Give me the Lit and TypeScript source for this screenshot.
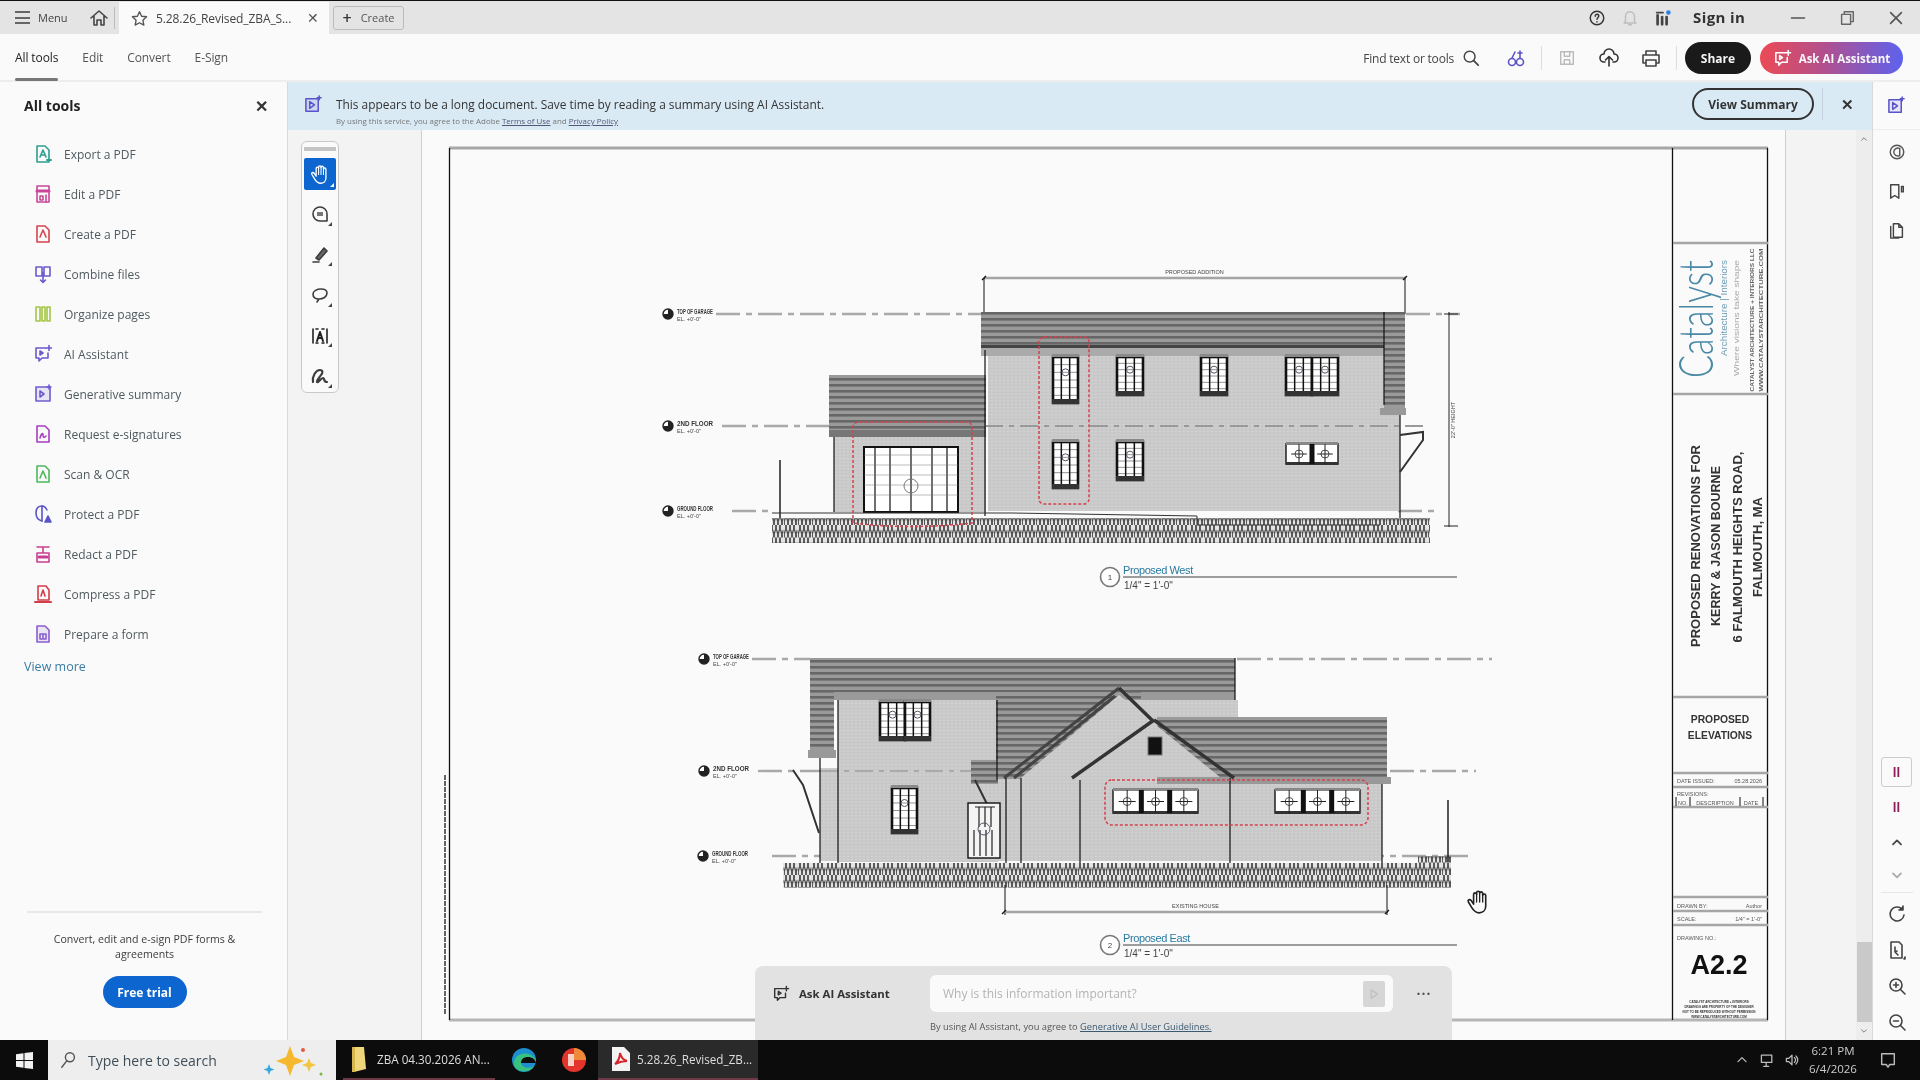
import { LitElement, html, css, svg } from 'lit';
import { customElement } from 'lit/decorators.js';

const icon = (body: unknown, size = 20, color = '#444', box = 20) => html`
  <svg width=${size} height=${size} viewBox="0 0 ${box} ${box}" fill="none" stroke=${color} stroke-width="1.6"
    stroke-linecap="round" stroke-linejoin="round" style="display:block;flex:none">${body}</svg>`;

const aiGlyph = svg`<path d="M3 4h10M3 4v10h3v3l3-3h6V9"/><path d="M7 7v4l3-2z"/><path d="M16 1.5v5M13.5 4h5"/>`;
const fileBase = svg`<path d="M4 2h8l4 4v12H4z"/>`;
const handGlyph = (fill: string, line: string) => svg`
  <path d="M7 14V5a1.4 1.4 0 0 1 2.8 0V3.500a1.400 1.400 0 0 1 2.800 0V4a1.400 1.400 0 0 1 2.800 0v2a1.400 1.400 0 0 1 2.800 0V16c0 4-3 6-6 6s-5-1.500-7-5l-3-5c-1-2 1-3 2.500-1.500z" fill=${fill} stroke=${line} stroke-width="1.500"/>
  <path d="M9.800 5v7M12.600 4v8M15.400 5v7" stroke=${line} stroke-width="1.200"/>`;

const tools: [string, string, unknown][] = [
  ['Export a PDF', '#2d9f8f', svg`${fileBase}<path d="M7 13l3-7 3 7M8 11h4"/><path d="M14 16h4" stroke-width="2"/>`],
  ['Edit a PDF', '#c9479a', svg`<path d="M4 2h12v16H4z"/><path d="M4 7h12" stroke-width="3"/><path d="M7 12h3v4H7zM13 11v7"/>`],
  ['Create a PDF', '#d8434e', svg`${fileBase}<path d="M7 13l3-7 3 7"/>`],
  ['Combine files', '#6a5acd', svg`<path d="M3 3h6v9H3zM11 3h6v9h-6zM10 9v9M7.5 16l2.5 2.5 2.5-2.5"/>`],
  ['Organize pages', '#a3c644', svg`<path d="M3 3h4v14H3zM9 3h3v14H9zM14 3h3v14h-3z"/>`],
  ['AI Assistant', '#6a5acd', aiGlyph],
  ['Generative summary', '#6f5bd0', svg`<path d="M3 3h14v14H3z" fill="#6f5bd022"/><path d="M7 7v6l4-3z"/><path d="M16 1v4M14 3h4"/>`],
  ['Request e-signatures', '#a83ec2', svg`${fileBase}<path d="M7 14c1-4 3-6 3-3s1 3 3 1"/>`],
  ['Scan & OCR', '#4cb85c', svg`${fileBase}<path d="M7 14l3-7 3 7"/>`],
  ['Protect a PDF', '#5a53c8', svg`<path d="M9 2C5 2 3 5 3 9s2 7 6 8"/><path d="M9 2v15M9 2c3 0 4 2 5 4"/><path d="M12 18h6l-3-6z" fill="#5a53c8"/>`],
  ['Redact a PDF', '#c93f8f', svg`<path d="M4 3h12M10 3v6M4 9h12v9H4z"/><path d="M6 13h8" stroke-width="3"/>`],
  ['Compress a PDF', '#d43d4a', svg`<path d="M5 2h8l3 4v10H5z"/><path d="M8 12l2-6 2 6"/><path d="M2 18h16" stroke-width="2"/>`],
  ['Prepare a form', '#8a5ed0', svg`<path d="M4 2h8l4 4v12H4z" fill="#8a5ed022"/><path d="M7 10h6v5H7zM10 10v5"/>`],
];

const railLower: [string, unknown][] = [
  ['rotate', svg`<path d="M15 5a7 7 0 1 0 2 6"/><path d="M16 2v4h-4" fill="#333"/>`],
  ['fit', svg`<path d="M4 2h8l3 3v13H4z"/><path d="M8 7v5l2-1M8 12l3 3"/><path d="M17 19l1-2v2z" fill="#333"/>`],
  ['in', svg`<circle cx="9" cy="9" r="6"/><path d="M13.5 13.5L18 18M6.5 9h5M9 6.5v5"/>`],
  ['out', svg`<circle cx="9" cy="9" r="6"/><path d="M13.5 13.5L18 18M6.5 9h5"/>`],
];

// --- the drawing sheet, page coordinates are the content ---

const windowUnit = (x: number, y: number, w: number, h: number) => svg`
  <rect x=${x} y=${y} width=${w} height=${h} fill="#fff"/>
  <path d="M${x} ${y + h / 6}h${w}M${x} ${y + h / 3}h${w}M${x} ${y + h / 2}h${w}M${x} ${y + (2 * h) / 3}h${w}M${x} ${y + (5 * h) / 6}h${w}" stroke="#666" stroke-width=".7"/>
  <path d="M${x + w / 3} ${y}v${h}M${x + (2 * w) / 3} ${y}v${h}" stroke="#111" stroke-width="1.5"/>
  <rect x=${x} y=${y} width=${w} height=${h} fill="none" stroke="#111" stroke-width="2.6"/>
  <rect x=${x - 1} y=${y + h - 4} width=${w + 2} height="5" fill="#333"/>
  <rect x=${x - 1} y=${y - 3} width=${w + 2} height="3" fill="#8a8a8a"/>
  <circle cx=${x + w / 2} cy=${y + h / 3} r="3.500" fill="none" stroke="#556"/>
`;

const bandWindow = (x: number, y: number, w: number, h: number, n: number) => svg`
  <rect x=${x} y=${y} width=${w} height=${h} fill="#fff" stroke="#222" stroke-width="1.5"/>
  <rect x=${x} y=${y - 2} width=${w} height="3" fill="#888"/>
  <rect x=${x} y=${y + h - 2} width=${w} height="3" fill="#333"/>
  ${Array.from({ length: n }, (_, i) => svg`
    <rect x=${x + ((i + 1) * w) / n - 2.5} y=${y} width="5" height=${h} fill="#111" opacity=${i < n - 1 ? 1 : 0}/>
    <circle cx=${x + ((i + 0.5) * w) / n} cy=${y + h / 2} r="4" fill="none" stroke="#555"/>
    <path d="M${x + ((i + 0.2) * w) / n} ${y + h / 2}h${(0.6 * w) / n}M${x + ((i + 0.5) * w) / n} ${y}v${h}" stroke="#222"/>`)}
`;

const level = (x: number, y: number, label: string, from: number, to: number, extra = '') => svg`
  <path d="M${from} ${y}H${to}" stroke="#a9a9a9" stroke-width="2.4" stroke-dasharray="24 6 6 6"/>
  ${extra ? svg`<path d=${extra} stroke="#a9a9a9" stroke-width="2.4" stroke-dasharray="24 6 6 6"/>` : ''}
  <circle cx=${x} cy=${y} r="5" fill="#fff" stroke="#222" stroke-width="1.4"/>
  <path d="M${x} ${y - 5}a5 5 0 0 1 0 10zM${x - 5} ${y}a5 5 0 0 0 5 5v-5z" fill="#222"/>
  <text x=${x + 9} y=${y} textLength="36" lengthAdjust="spacingAndGlyphs" class="label">${label}</text>
  <text x=${x + 9} y=${y + 7} class="tiny">EL. +0'-0"</text>
`;

const dimension = (x1: number, x2: number, y: number, label: string, ty: number) => svg`
  <path d="M${x1} ${y}H${x2}" stroke="#a5a5a5" stroke-width="2.4"/>
  <path d="M${x1 - 2} ${y + 2}l4-4M${x2 - 2} ${y + 2}l4-4" stroke="#111" stroke-width="1.4"/>
  <text x=${(x1 + x2) / 2} y=${ty} text-anchor="middle" class="tiny">${label}</text>
`;

const caption = (n: string, title: string, cx: number, cy: number) => svg`
  <circle cx=${cx} cy=${cy} r="9.5" fill="#fff" stroke="#777" stroke-width="1.6"/>
  <text x=${cx} y=${cy + 3} text-anchor="middle" class="num">${n}</text>
  <path d="M${cx + 13} ${cy}H1457" stroke="#9d9d9d" stroke-width="2"/>
  <text x=${cx + 13} y=${cy - 3} class="cap">${title}</text>
  <text x=${cx + 14} y=${cy + 12} class="scale">1/4" = 1'-0"</text>
`;

const rule = (y: number) => svg`<path d="M1673 ${y}H1768" stroke="#a6a6a6" stroke-width="2.6"/>`;

const turned = (x: number, y: number, len: number, cls: string, text: string) => svg`
  <text transform="rotate(-90 ${x} ${y})" x=${x} y=${y} text-anchor="middle" textLength=${len} lengthAdjust="spacingAndGlyphs" class=${cls}>${text}</text>`;

const sheet = svg`
  <defs>
    <pattern id="roof" width="8" height="6" patternUnits="userSpaceOnUse">
      <rect width="8" height="6" fill="#9a9a9a"/><rect width="8" height="2.600" fill="#676767"/>
    </pattern>
    <pattern id="siding" width="4" height="3.400" patternUnits="userSpaceOnUse">
      <rect width="4" height="3.400" fill="#ededed"/>
      <path d="M0 3.400L1 0L2 3.400L3 0L4 3.400" fill="none" stroke="#8f8f8f" stroke-width=".4"/>
    </pattern>
    <pattern id="stone" width="14" height="12.500" patternUnits="userSpaceOnUse">
      <rect width="14" height="12.500" fill="#e4e4e4"/>
      <rect y="5" width="14" height="3" fill="#a0a0a0"/>
      <path d="M2 0v6M6 0v6M10 0v6M0 6.500v6M4 6.500v6M8 6.500v6M12 6.500v6" stroke="#111" stroke-width="1.300"/>
    </pattern>
  </defs>

  <!-- sheet frame -->
  <path d="M449 148H1768" stroke="#a6a6a6" stroke-width="3"/>
  <path d="M449 1020H1768" stroke="#b5b5b5" stroke-width="3"/>
  <path d="M449.5 148V1020M1672.5 148V1020M1767.5 148V1020" stroke="#111" stroke-width="1.3"/>
  <path d="M445 775V1015" stroke="#333" stroke-width="1.5" stroke-dasharray="5 1"/>

  <!-- proposed west -->
  ${dimension(984, 1405, 278, 'PROPOSED ADDITION', 274)}
  <path d="M984 278V314M1405 278V314" stroke="#111" stroke-width="1"/>
  ${level(668, 314, 'TOP OF GARAGE', 716, 981, 'M1406 314H1460')}
  ${level(668, 426, '2ND FLOOR', 722, 829)}
  ${level(668, 511, 'GROUND FLOOR', 732, 772, 'M1398 511H1440')}

  <rect x="829" y="375" width="157" height="57" fill="url(#roof)"/>
  <rect x="829" y="430" width="157" height="7" fill="#777"/>
  <rect x="834" y="437" width="152" height="75" fill="url(#siding)"/>
  <rect x="864" y="447" width="94" height="65" fill="#fff" stroke="#111" stroke-width="2"/>
  <path d="M875 447v65M890 447v65M911 447v65M932 447v65M947 447v65" stroke="#111" stroke-width="1.200"/>
  <path d="M864 455h94M864 465h94M864 475h94M864 485h94M864 495h94" stroke="#777" stroke-width=".5"/>
  <circle cx="911" cy="486" r="7" fill="none" stroke="#777"/>

  <rect x="988" y="350" width="412" height="161" fill="url(#siding)"/>
  <path d="M985 426H1425" stroke="#999" stroke-width="2" stroke-dasharray="18 6 5 6"/>
  <rect x="981" y="312" width="424" height="37" fill="url(#roof)"/>
  <rect x="981" y="345" width="405" height="3" fill="#444"/>
  <rect x="981" y="348" width="405" height="8" fill="#aaa"/>
  <rect x="1384" y="312" width="21" height="100" fill="url(#roof)"/>
  <rect x="1380" y="408" width="26" height="7" fill="#999"/>
  <path d="M985 350V516M1400 415V525M834 437V512M1384 312V405" stroke="#111" stroke-width="1.200"/>
  <path d="M1400 435l23-3v8l-23 32" fill="none" stroke="#333" stroke-width="2"/>
  <path d="M780 460V520" stroke="#111" stroke-width="1.400"/>

  ${windowUnit(1053, 357, 25, 46)}
  ${windowUnit(1117, 357, 26, 38)}
  ${windowUnit(1201, 357, 26, 38)}
  ${windowUnit(1286, 357, 26, 38)}
  ${windowUnit(1312, 357, 26, 38)}
  ${windowUnit(1053, 442, 25, 46)}
  ${windowUnit(1117, 442, 26, 38)}
  ${bandWindow(1286, 444, 52, 20, 2)}

  <rect x="772" y="518" width="658" height="25" fill="url(#stone)"/>
  <path d="M772 513H1012L1197 516V525H1380" fill="none" stroke="#333" stroke-width="1"/>
  <path d="M1449 312V527M1444 314h14M1444 526h14" stroke="#222" stroke-width="1"/>
  <text transform="rotate(-90 1455 420)" x="1455" y="420" text-anchor="middle" class="tiny">22'-0" HEIGHT</text>

  <rect x="1039" y="337" width="50" height="167" rx="5" class="redline"/>
  <path d="M853 523V428q0-6 6-6H966q6 0 6 6V523Q910 530 853 523Z" class="redline"/>
  ${caption('1', 'Proposed West', 1110, 577)}

  <!-- proposed east -->
  ${level(704, 659, 'TOP OF GARAGE', 752, 810, 'M1237 659H1492')}
  ${level(704, 771, '2ND FLOOR', 758, 820, 'M1390 771H1476')}
  ${level(703, 856, 'GROUND FLOOR', 772, 1470)}

  <rect x="838" y="695" width="160" height="167" fill="url(#siding)"/>
  <rect x="820" y="768" width="562" height="93" fill="url(#siding)"/>
  <rect x="1120" y="700" width="118" height="80" fill="url(#siding)"/>
  <path d="M820 771H1382" stroke="#aaa" stroke-width="2" stroke-dasharray="18 6 5 6"/>
  <rect x="810" y="658" width="425" height="36" fill="url(#roof)"/>
  <rect x="833" y="692" width="402" height="8" fill="#9a9a9a"/>
  <rect x="810" y="658" width="24" height="92" fill="url(#roof)"/>
  <rect x="808" y="750" width="28" height="8" fill="#999"/>
  <rect x="996" y="694" width="124" height="85" fill="url(#roof)"/>
  <rect x="1157" y="717" width="230" height="60" fill="url(#roof)"/>
  <rect x="971" y="760" width="27" height="24" fill="url(#roof)"/>
  <rect x="1127" y="669" width="14" height="30" fill="url(#roof)"/>
  <polygon points="1119,695 1016,782 1226,782" fill="url(#siding)"/>
  <rect x="1157" y="777" width="234" height="7" fill="#999"/>
  <path d="M1119 688L1004 778M1115 696L1014 778" stroke="#444" stroke-width="3"/>
  <path d="M1119 688L1154 722M1154 720L1072 778M1154 720L1234 778" stroke="#333" stroke-width="3.400"/>
  <rect x="1148" y="737" width="14" height="18" fill="#111" stroke="#777"/>
  <path d="M1006 778V882M1021 778V866M1080 780V866M1230 778V866M1382 784V866M997 700V780M1235 658V700M838 700V865M820 758V865" stroke="#111" stroke-width="1.200"/>
  <path d="M793 770l10 15 16 48M975 780l20 40" stroke="#333" stroke-width="2" fill="none"/>
  ${windowUnit(880, 702, 25, 38)}
  ${windowUnit(905, 702, 25, 38)}
  ${windowUnit(892, 788, 25, 45)}
  <rect x="968" y="803" width="32" height="55" fill="#f4f4f4" stroke="#111" stroke-width="1.400"/>
  <path d="M975 807h20M979 807v20M985 807v20M991 807v20M974 830v26M980 830v26M986 830v26M992 830v26" stroke="#222" stroke-width="1.200"/>
  <circle cx="984" cy="829" r="6" fill="none" stroke="#556"/>
  ${bandWindow(1113, 790, 85, 23, 3)}
  ${bandWindow(1275, 790, 85, 23, 3)}
  <rect x="783" y="863" width="668" height="25" fill="url(#stone)"/>
  <rect x="1418" y="856" width="33" height="10" fill="url(#stone)"/>
  <path d="M1448 800V862" stroke="#111" stroke-width="1.400"/>
  <path d="M1005 885V915M1387 885V915" stroke="#111" stroke-width="1"/>
  ${dimension(1004, 1387, 912, 'EXISTING HOUSE', 908)}
  <rect x="1105" y="780" width="263" height="45" rx="7" class="redline"/>
  ${caption('2', 'Proposed East', 1110, 945)}

  <!-- title block -->
  ${rule(243)}${rule(394)}${rule(697)}${rule(773)}${rule(787)}${rule(807)}${rule(897)}${rule(911)}${rule(925)}
  ${turned(1713, 319, 118, 'logo', 'Catalyst')}
  ${turned(1727, 308, 96, 'logo-sub', 'Architecture | Interiors')}
  ${turned(1739, 318, 116, 'logo-tag', 'Where visions take shape')}
  ${turned(1754, 320, 143, 'logo-ad', 'CATALYST ARCHITECTURE + INTERIORS LLC')}
  ${turned(1763, 320, 143, 'logo-ad', 'WWW.CATALYSTARCHITECTURE.COM')}
  ${turned(1700, 546, 202, 'project', 'PROPOSED RENOVATIONS FOR')}
  ${turned(1720, 546, 160, 'project', 'KERRY & JASON BOURNE')}
  ${turned(1742, 547, 191, 'project', '6 FALMOUTH HEIGHTS ROAD,')}
  ${turned(1762, 547, 100, 'project', 'FALMOUTH, MA')}
  <text x="1720" y="723" text-anchor="middle" class="sheet-title">PROPOSED</text>
  <text x="1720" y="739" text-anchor="middle" class="sheet-title">ELEVATIONS</text>
  <text x="1677" y="783" class="block">DATE ISSUED:</text>
  <text x="1762" y="783" text-anchor="end" class="block">05.28.2026</text>
  <text x="1677" y="796" class="block">REVISIONS:</text>
  <path d="M1676 797V806M1690 797V806M1740 797V806M1763 797V806" stroke="#111" stroke-width="1"/>
  <text x="1683" y="805" text-anchor="middle" class="block">NO.</text>
  <text x="1715" y="805" text-anchor="middle" class="block">DESCRIPTION</text>
  <text x="1751" y="805" text-anchor="middle" class="block">DATE</text>
  <text x="1677" y="908" class="block">DRAWN BY:</text>
  <text x="1762" y="908" text-anchor="end" class="block">Author</text>
  <text x="1677" y="921" class="block">SCALE:</text>
  <text x="1762" y="921" text-anchor="end" class="block">1/4" = 1'-0"</text>
  <text x="1677" y="940" class="block">DRAWING NO.:</text>
  <text x="1719" y="974" text-anchor="middle" class="drawing-no">A2.2</text>
  <text x="1719" y="1003" text-anchor="middle" class="fine">CATALYST ARCHITECTURE + INTERIORS</text>
  <text x="1719" y="1008" text-anchor="middle" class="fine">DRAWINGS ARE PROPERTY OF THE DESIGNER</text>
  <text x="1719" y="1013" text-anchor="middle" class="fine">NOT TO BE REPRODUCED WITHOUT PERMISSION</text>
  <text x="1719" y="1018" text-anchor="middle" class="fine">WWW.CATALYSTARCHITECTURE.COM</text>
`;

@customElement('app-root')
export class AppRoot extends LitElement {
  static styles = css`
    :host {
      display: block;
      width: 1920px;
      height: 1080px;
      overflow: hidden;
      font-family: 'Open Sans', 'Noto Sans', sans-serif;
      color: #333;
      background: #fafafa;
      filter: blur(0.4px);
    }
    .app { display: flex; flex-direction: column; height: 1080px; }

    /* title bar */
    .titlebar {
      height: 33px;
      flex: none;
      border-top: 1px solid #111;
      background: #e4e4e4;
      display: flex;
      align-items: center;
      font-size: 11px;
    }
    .menu { display: flex; align-items: center; gap: 8px; padding-left: 15px; width: 72px; color: #444; }
    .bars { width: 15px; height: 13px; border-top: 2px solid #666; border-bottom: 2px solid #666; position: relative; box-sizing: border-box; }
    .bars::after { content: ''; position: absolute; left: 0; right: 0; top: 3.5px; height: 2px; background: #666; }
    .home { width: 24px; display: flex; justify-content: center; }
    .tab-gap { width: 3px; height: 22px; border-right: 1px solid #bbb; margin-right: 4px; }
    .tab {
      width: 210px;
      height: 32px;
      margin-top: 1px;
      background: #fafafa;
      display: flex;
      align-items: center;
      box-sizing: border-box;
      padding-left: 11px;
      gap: 8px;
      font-size: 12px;
      color: #444;
      flex: none;
    }
    .tab-name { width: 142px; white-space: nowrap; letter-spacing: -0.1px; }
    .tab-x { margin-left: 1px; font-size: 14px; line-height: 1; color: #555; }
    .create {
      margin-left: 4px;
      height: 24px;
      width: 71px;
      box-sizing: border-box;
      border: 1px solid #bbb;
      border-radius: 3px;
      display: flex;
      align-items: center;
      justify-content: center;
      gap: 9px;
      font-size: 11px;
      color: #555;
    }
    .create b { font-size: 16px; font-weight: 600; color: #333; line-height: 1; }
    .spacer { flex: 1; }
    .title-right { display: flex; align-items: center; color: #333; }
    .sign-in { font-size: 15px; font-weight: 700; letter-spacing: 0.4px; color: #333; width: 80px; margin: -2px 0 0 14px; }
    .win { width: 49px; display: flex; justify-content: center; }
    .slot33 { width: 33px; display: flex; justify-content: center; }

    /* app toolbar */
    .toolbar {
      height: 48px;
      flex: none;
      background: #fafafa;
      border-bottom: 2px solid #ededed;
      box-sizing: border-box;
      padding-top: 2px;
      display: flex;
      align-items: center;
      font-size: 12px;
      color: #555;
    }
    .nav { display: flex; gap: 24px; padding-left: 15px; height: 100%; align-items: center; }
    .nav span { position: relative; line-height: 44px; letter-spacing: -0.1px; }
    .nav .on { color: #222; }
    .nav .on::after { content: ''; position: absolute; left: 0; right: 0; bottom: -1px; height: 3px; background: #777; border-radius: 2px; }
    .actions { display: flex; align-items: center; }
    .find { color: #444; margin-right: 8px; white-space: nowrap; letter-spacing: -0.2px; }
    .tool-slot { width: 42px; display: flex; justify-content: center; }
    .vline { width: 1px; height: 24px; background: #ddd; }
    .share {
      width: 66px;
      height: 32px;
      margin-left: 8px;
      border-radius: 16px;
      background: #1a1a1a;
      color: #f5f5f5;
      font-weight: 700;
      font-size: 12px;
      display: flex;
      align-items: center;
      justify-content: center;
    }
    .ask {
      width: 143px;
      height: 32px;
      margin: 0 17px 0 9px;
      border-radius: 16px;
      background: linear-gradient(90deg, #ec4a55, #b1508e 45%, #5d62ee);
      color: #f8f8f8;
      font-weight: 700;
      font-size: 11.500px;
      display: flex;
      align-items: center;
      justify-content: center;
      gap: 7px;
    }

    /* main */
    .main { flex: 1; min-height: 0; display: flex; }
    .sidebar {
      width: 287px;
      flex: none;
      border-right: 1px solid #d8d8d8;
      background: #fafafa;
      display: flex;
      flex-direction: column;
      box-sizing: content-box;
    }
    .side-head {
      display: flex;
      justify-content: space-between;
      align-items: center;
      padding: 14px 19px 0 24px;
      font-size: 14px;
      font-weight: 700;
      color: #222;
    }
    .side-x { font-size: 16px; font-weight: 700; color: #333; line-height: 1; }
    .tool-list { list-style: none; margin: 19px 0 0; padding: 0 0 0 33px; }
    .tool-list li { height: 40px; display: flex; align-items: center; gap: 11px; font-size: 12px; color: #4f5a5f; }
    .more { margin: 4px 0 0 24px; font-size: 12.500px; color: #3a7ca5; }
    .promo { margin: auto 25px 32px 27px; border-top: 2px solid #e8e8e8; text-align: center; padding-top: 19px; font-size: 10.600px; line-height: 15px; color: #3b3b3b; }
    .trial {
      display: inline-flex;
      align-items: center;
      justify-content: center;
      width: 84px;
      height: 32px;
      margin-top: 14px;
      border-radius: 16px;
      background: #0d66d0;
      color: #fff;
      font-weight: 700;
      font-size: 12px;
    }

    .work { flex: 1; min-width: 0; display: flex; flex-direction: column; }
    .banner {
      height: 48px;
      box-sizing: border-box;
      padding: 0 0 4px 16px;
      flex: none;
      background: #d9eaf5;
      display: flex;
      align-items: center;
      gap: 13px;
    }
    .banner-text { align-self: flex-start; margin-top: 14px; }
    .banner-main { font-size: 11.900px; color: #333; line-height: 16px; white-space: nowrap; }
    .banner-fine { font-size: 7.900px; line-height: 9px; margin-top: 5px; color: #777; }
    .banner-fine u { color: #557; }
    .summary {
      width: 122px;
      height: 32px;
      box-sizing: border-box;
      border: 2px solid #333;
      border-radius: 16px;
      display: flex;
      align-items: center;
      justify-content: center;
      font-size: 12px;
      font-weight: 700;
      color: #333;
    }
    .banner-end { display: flex; align-items: center; margin-left: auto; }
    .banner-x { width: 49px; height: 32px; margin-left: 8px; border-left: 1px solid #c4d3dd; display: flex; align-items: center; justify-content: center; font-size: 15px; font-weight: 700; color: #333; }

    .canvas { flex: 1; min-height: 0; display: flex; position: relative; background: #f3f3f3; }
    .gutter { width: 133px; flex: none; border-right: 1px solid #cfcfcf; }
    .page { width: 1363px; flex: none; background: #fafafa; }
    .page svg { display: block; }
    .margin { flex: 1; border-left: 1px solid #cfcfcf; display: flex; justify-content: flex-end; }
    .scroll { width: 16px; background: #ededed; display: flex; flex-direction: column; align-items: center; color: #666; }
    .thumb { width: 15px; height: 80px; margin-top: auto; background: #c9c9c9; }
    .arrow { height: 18px; display: flex; align-items: center; justify-content: center; }

    .float-tools {
      position: absolute;
      left: 13px;
      top: 11px;
      width: 38px;
      height: 252px;
      background: #fafafa;
      border: 1px solid #c8c8c8;
      border-radius: 6px;
      box-sizing: border-box;
      display: flex;
      flex-direction: column;
      align-items: center;
      padding-top: 5px;
    }
    .grip { width: 32px; height: 4px; background: #c4c4c4; margin-bottom: 7px; flex: none; }
    .ft { width: 32px; height: 40.500px; flex: none; display: flex; align-items: center; justify-content: center; position: relative; }
    .ft::after { content: ''; position: absolute; right: 4px; bottom: 9px; border: 2px solid transparent; border-right-color: #444; border-bottom-color: #444; }
    .ft.active { height: 32px; margin-bottom: 4px; background: #0d66d0; border-radius: 2px; }
    .ft.active::after { border-right-color: #fff; border-bottom-color: #fff; bottom: 3px; right: 2px; }

    .ask-panel {
      position: absolute;
      left: 467px;
      bottom: 0;
      width: 697px;
      height: 74px;
      background: #e2e2e2;
      border-radius: 8px 8px 0 0;
      box-sizing: border-box;
      display: grid;
      grid-template-columns: 175px 463px 1fr;
      grid-template-rows: 37px 1fr;
      padding-top: 9px;
      font-size: 12px;
    }
    .ask-label { display: flex; align-items: center; gap: 9px; padding-left: 17px; font-weight: 700; font-size: 11.400px; color: #333; }
    .ask-input {
      background: #fafafa;
      border-radius: 6px;
      display: flex;
      align-items: center;
      justify-content: space-between;
      padding: 0 8px 0 13px;
      color: #b3b3b3;
    }
    .send { width: 22px; height: 26px; background: #d6d6d6; border-radius: 2px; display: flex; align-items: center; justify-content: center; }
    .dots { text-align: center; align-self: center; color: #555; font-size: 14px; font-weight: 700; letter-spacing: 1px; padding-left: 3px; }
    .ask-note { grid-column: 2 / 4; font-size: 9.300px; color: #555; align-self: center; white-space: nowrap; }
    .ask-note u { color: #3a5a72; }
    .cursor { position: absolute; left: 1178px; top: 759px; }

    .rail { width: 47px; flex: none; border-left: 1px solid #d8d8d8; background: #fafafa; display: flex; flex-direction: column; align-items: center; }
    .rail-top { height: 48px; width: 100%; border-bottom: 1px solid #ededed; display: flex; align-items: center; justify-content: center; box-sizing: border-box; }
    .rail-slot { height: 39px; display: flex; align-items: center; justify-content: center; flex: none; }
    .rail-gap { flex: 1; }
    .rail-page { width: 31px; height: 30px; border: 1px solid #ccc; border-radius: 3px; box-sizing: border-box; background: #fafafa; display: flex; justify-content: center; align-items: center; flex: none; color: #8d1e5a; font-size: 12px; font-weight: 700; }
    .rail-plain { height: 37px; width: 31px; display: flex; align-items: center; justify-content: center; flex: none; color: #8d1e5a; font-size: 12px; font-weight: 700; }
    .rail-line { width: 32px; height: 1px; background: #e6e6e6; flex: none; margin: 0 0 3px; }

    /* taskbar */
    .taskbar { height: 40px; flex: none; background: #0c0c0c; display: flex; align-items: stretch; color: #ddd; font-size: 11.700px; }
    .start { width: 48px; display: flex; align-items: center; justify-content: center; }
    .search { width: 288px; background: #eeeeee; display: flex; align-items: center; padding-left: 12px; box-sizing: border-box; gap: 10px; font-size: 14px; color: #3f4e58; position: relative; }
    .sparkle { position: absolute; left: 215px; top: 4px; }
    .task { display: flex; align-items: center; gap: 11px; box-sizing: border-box; border-bottom: 2px solid #6e3a48; white-space: nowrap; }
    .task.files { width: 152px; margin-left: 7px; padding-left: 9px; }
    .task.pdf { width: 160px; padding-left: 14px; background: #2a2a2a; gap: 7px; }
    .pin { width: 50px; display: flex; align-items: center; justify-content: center; }
    .pin.edge { margin-left: 4px; }
    .pin.ppt { width: 49px; }
    .tray { margin-left: auto; padding-right: 16px; display: flex; align-items: center; color: #ccc; }
    .clock { font-size: 11.500px; line-height: 18px; text-align: center; width: 58px; margin: 0 10px 0 0; }
    .tray-slot { width: 25px; display: flex; justify-content: center; }
    .notify { width: 32px; display: flex; justify-content: center; }

    /* sheet */
    .tiny { font: 5.500px 'Liberation Sans', sans-serif; fill: #444; }
    .label { font: 700 7px 'Liberation Sans', sans-serif; fill: #333; }
    .num { font: 8px 'Liberation Sans', sans-serif; fill: #444; }
    .cap { font: 11px 'Liberation Sans', sans-serif; fill: #2a7aa0; letter-spacing: -0.4px; }
    .scale { font: 10px 'Liberation Sans', sans-serif; fill: #444; }
    .redline { fill: none; stroke: #d5424e; stroke-width: 1.500; stroke-dasharray: 3 2; }
    .logo { font: 300 48px Lato, sans-serif; fill: #4a88a6; }
    .logo-sub { font: 9px 'Liberation Sans', sans-serif; fill: #6f9cb3; }
    .logo-tag { font: 8px 'Liberation Sans', sans-serif; fill: #aaa; }
    .logo-ad { font: 700 5px 'Liberation Sans', sans-serif; fill: #666; }
    .project { font: 700 12px 'Liberation Sans', sans-serif; fill: #333; }
    .sheet-title { font: 700 10.300px 'Liberation Sans', sans-serif; fill: #333; }
    .block { font: 5.500px 'Liberation Sans', sans-serif; fill: #555; }
    .drawing-no { font: 700 27px 'Liberation Sans', sans-serif; fill: #111; }
    .fine { font: 700 3px 'Liberation Sans', sans-serif; fill: #333; }
  `;

  render() {
    return html`<div class="app">
      ${this.titlebar()}
      ${this.toolbar()}
      <div class="main">
        ${this.sidebar()}
        <div class="work">
          ${this.banner()}
          <div class="canvas">
            <div class="gutter"></div>
            <div class="page">
              <svg width="1363" height="910" viewBox="422 130 1363 910">${sheet}</svg>
            </div>
            <div class="margin">
              <div class="scroll">
                <div class="arrow">${icon(svg`<path d="M6 12l4-4 4 4"/>`, 12, '#777')}</div>
                <div class="thumb"></div>
                <div class="arrow">${icon(svg`<path d="M6 8l4 4 4-4"/>`, 12, '#777')}</div>
              </div>
            </div>
            ${this.floatTools()}
            ${this.askPanel()}
            <div class="cursor">${icon(handGlyph('#fafafa', '#222'), 26, '#222', 24)}</div>
          </div>
        </div>
        ${this.rail()}
      </div>
      ${this.taskbar()}
    </div>`;
  }

  titlebar() {
    return html`<div class="titlebar">
      <div class="menu"><div class="bars"></div><span>Menu</span></div>
      <div class="home">${icon(svg`<path d="M2 10l8-7 8 7M5 8v9h3v-5h4v5h3V8"/>`, 20, '#444')}</div>
      <div class="tab-gap"></div>
      <div class="tab" style="padding-left:12px">
        ${icon(svg`<path d="M10 2l2.500 5.300 5.800.7-4.300 4 1.100 5.700L10 15l-5.100 2.700L6 12 1.700 8l5.800-.7z"/>`, 17, '#555')}
        <span class="tab-name">5.28.26_Revised_ZBA_S...</span>
        <span class="tab-x">✕</span>
      </div>
      <div class="create"><b>+</b><span>Create</span></div>
      <div class="spacer"></div>
      <div class="title-right">
        <div class="slot33">${icon(svg`<circle cx="10" cy="10" r="7.500"/><path d="M8 8c0-3 4.500-2.500 4 0-.3 1.500-2 1.500-2 3.500M10 14v.5"/>`, 18, '#333')}</div>
        <div class="slot33">${icon(svg`<path d="M5 14V8a5 5 0 0 1 10 0v6l1.500 1.500h-13zM8.500 17.500h3"/>`, 18, '#bdbdbd')}</div>
        <div class="slot33">${icon(svg`<path d="M4 7v10M9 9v8M14 9v8" stroke-width="3" stroke="#444"/><circle cx="16" cy="4" r="2.500" fill="#2d7fe0" stroke="none"/><path d="M3 4h7" stroke-width="2" stroke="#444"/>`, 18)}</div>
        <div class="sign-in">Sign in</div>
        <div class="win">${icon(svg`<path d="M3 10h14" stroke-width="2.200"/>`, 18, '#777')}</div>
        <div class="win">${icon(svg`<path d="M4 6h10v11H4zM7 6V3h10v11h-3"/>`, 18, '#666')}</div>
        <div class="win">${icon(svg`<path d="M4 4l12 12M16 4L4 16" stroke-width="1.800"/>`, 18, '#555')}</div>
      </div>
    </div>`;
  }

  toolbar() {
    return html`<div class="toolbar">
      <div class="nav">
        <span class="on">All tools</span><span>Edit</span><span>Convert</span><span>E-Sign</span>
      </div>
      <div class="spacer"></div>
      <div class="actions">
        <span class="find">Find text or tools</span>
        ${icon(svg`<circle cx="8.500" cy="8.500" r="6"/><path d="M13 13l5 5" stroke-width="2"/>`, 18, '#444')}
        <div class="tool-slot" style="margin:0 4px 0 15px">${icon(svg`<circle cx="6" cy="14" r="3.500"/><circle cx="14" cy="14" r="3.500"/><path d="M6 10L9 4M14 10V3M12 5h4"/>`, 20, '#5a53c8')}</div>
        <div class="vline"></div>
        <div class="tool-slot" style="margin-left:4px">${icon(svg`<path d="M3 3h14v14H3zM7 3v5h6V3M7 17v-5h6v5"/>`, 18, '#bbb')}</div>
        <div class="tool-slot">${icon(svg`<path d="M6 14H5a4 4 0 0 1 0-8 5 5 0 0 1 10 0 4 4 0 0 1 0 8h-1M10 18V9M6.500 12L10 8.500l3.500 3.500"/>`, 20, '#333')}</div>
        <div class="tool-slot">${icon(svg`<path d="M5 7V3h10v4M5 15H2V7h16v8h-3M5 12h10v6H5z"/>`, 20, '#444')}</div>
        <div class="vline" style="margin-left:4px"></div>
        <div class="share">Share</div>
        <div class="ask">${icon(aiGlyph, 19, '#fff')}<span>Ask AI Assistant</span></div>
      </div>
    </div>`;
  }

  sidebar() {
    return html`<div class="sidebar">
      <div class="side-head"><span>All tools</span><span class="side-x">✕</span></div>
      <ul class="tool-list">
        ${tools.map(([name, color, glyph]) => html`<li>${icon(glyph, 20, color)}<span>${name}</span></li>`)}
      </ul>
      <div class="more">View more</div>
      <div class="promo">
        Convert, edit and e-sign PDF forms &amp; agreements
        <div><span class="trial">Free trial</span></div>
      </div>
    </div>`;
  }

  banner() {
    return html`<div class="banner">
      ${icon(svg`<path d="M2 4h13v13H2z" fill="#6f5bd022"/><path d="M6 7v7l5-3.500z"/><path d="M16 1v4M14 3h4"/>`, 19, '#5a53c8')}
      <div class="banner-text">
        <div class="banner-main">This appears to be a long document. Save time by reading a summary using AI Assistant.</div>
        <div class="banner-fine">By using this service, you agree to the Adobe <u>Terms of Use</u> and <u>Privacy Policy</u></div>
      </div>
      <div class="banner-end">
        <div class="summary">View Summary</div>
        <div class="banner-x">✕</div>
      </div>
    </div>`;
  }

  floatTools() {
    const dark = '#3d3d3d';
    return html`<div class="float-tools">
      <div class="grip"></div>
      <div class="ft active">${icon(handGlyph('#0d66d0', '#fff'), 21, '#fff', 24)}</div>
      <div class="ft">${icon(svg`<path d="M10 3a7 7 0 1 0 0 14h7v-7a7 7 0 0 0-7-7z"/><path d="M7 8h6v4H7z" fill="#777" stroke="none"/>`, 20, dark)}</div>
      <div class="ft">${icon(svg`<path d="M6 13L14 3l3 3-8 9z" fill="#666"/><path d="M3 17h6"/>`, 20, dark)}</div>
      <div class="ft">${icon(svg`<path d="M17 8c0 4-4 6-8 6s-6-2-6-5 4-5 8-5 6 2 6 4zM9 14l-2 3"/>`, 20, dark)}</div>
      <div class="ft">${icon(svg`<path d="M3 3v14M17 3v14M6 3h2M12 3h2M6 17h2M12 17h2"/><path d="M7 15l3-9 3 9M8 12h4" stroke-width="2"/>`, 20, '#222')}</div>
      <div class="ft">${icon(svg`<path d="M3 16c-1-6 3-12 7-12 3 0 3 3 1 5-2 3-5 6-4 7s4-4 6-4 0 4 4 4" stroke-width="2.200"/>`, 20, dark)}</div>
    </div>`;
  }

  askPanel() {
    return html`<div class="ask-panel">
      <div class="ask-label">${icon(aiGlyph, 18, '#333')}<span>Ask AI Assistant</span></div>
      <div class="ask-input">
        <span>Why is this information important?</span>
        <div class="send">${icon(svg`<path d="M6 4l9 6-9 6z"/>`, 14, '#bdbdbd')}</div>
      </div>
      <div class="dots">···</div>
      <div></div>
      <div class="ask-note">By using AI Assistant, you agree to <u>Generative AI User Guidelines.</u></div>
    </div>`;
  }

  rail() {
    return html`<div class="rail">
      <div class="rail-top">${icon(svg`<path d="M2 4h13v13H2z" fill="#6f5bd022"/><path d="M6 7v7l5-3.500z"/><path d="M16 1v4M14 3h4"/>`, 19, '#5a53c8')}</div>
      <div class="rail-slot" style="margin-top:2px">${icon(svg`<circle cx="10" cy="10" r="7.500"/><path d="M13 6a4.500 4.500 0 1 0 0 8V6"/>`, 18, '#555')}</div>
      <div class="rail-slot">${icon(svg`<path d="M3 3h9v15l-4.500-3L3 18zM15 5h2v6h-2z"/>`, 18, '#444')}</div>
      <div class="rail-slot">${icon(svg`<path d="M6 5V3h6l4 4v11H6zM12 3v4h4M3 6v13h9"/>`, 18, '#444')}</div>
      <div class="rail-gap"></div>
      <div class="rail-page">ll</div>
      <div class="rail-plain" style="margin-top:2px">ll</div>
      <div class="rail-slot" style="height:32px">${icon(svg`<path d="M5 13l5-5 5 5" stroke-width="2.200"/>`, 16, '#444')}</div>
      <div class="rail-slot" style="height:34px">${icon(svg`<path d="M5 8l5 5 5-5" stroke-width="2.200"/>`, 16, '#aaa')}</div>
      <div class="rail-line"></div>
      ${railLower.map(([, glyph]) => html`<div class="rail-slot" style="height:36px">${icon(glyph, 20, '#444')}</div>`)}
    </div>`;
  }

  taskbar() {
    return html`<div class="taskbar">
      <div class="start">
        <svg width="17" height="17" viewBox="0 0 17 17" fill="#f2f2f2"><path d="M0 2.200l7.500-1V8H0zM8.500 1l8.500-1v8H8.500zM0 9h7.500v6.800l-7.500-1zM8.500 9H17v8l-8.500-1z"/></svg>
      </div>
      <div class="search">
        ${icon(svg`<circle cx="11" cy="7" r="5"/><path d="M7.500 11L2 18"/>`, 18, '#555')}
        <span>Type here to search</span>
        <svg class="sparkle" width="64" height="34" viewBox="0 0 64 34">
          <path d="M27 2l4 11 10 4-10 4-4 11-4-11-10-4 10-4z" fill="#f5b82e"/>
          <path d="M46 14l2 5 5 2-5 2-2 5-2-5-5-2 5-2z" fill="#f3c544"/>
          <path d="M6 20l1.500 4 4 1.500-4 1.500L6 31l-1.500-4-4-1.500 4-1.500z" fill="#38a7dc"/>
          <circle cx="40" cy="6" r="2" fill="#e25c3c"/><circle cx="58" cy="30" r="1.500" fill="#79b64a"/>
        </svg>
      </div>
      <div class="task files">
        <svg width="14" height="28" viewBox="0 0 14 28"><path d="M0 2h12l2 22-12 3z" fill="#f0d67a"/><path d="M0 2h3v25H0z" fill="#d8b64e"/></svg>
        <span>ZBA 04.30.2026 AN...</span>
      </div>
      <div class="pin edge">
        <svg width="26" height="26" viewBox="0 0 26 26"><circle cx="13" cy="13" r="12" fill="#1c8fd0"/><path d="M3 16C3 8 13 4 20 8c4 2 5 6 5 8H10c1 5 8 6 13 3-3 5-9 6-13 5C5 23 3 20 3 16z" fill="#39c27f"/><path d="M10 16c0-4 3-6 7-6s7 2 8 6z" fill="#0c0c0c"/></svg>
      </div>
      <div class="pin ppt">
        <svg width="24" height="26" viewBox="0 0 24 26"><circle cx="12" cy="13" r="12" fill="#e3352c"/><path d="M12 1a12 12 0 0 1 12 12H12z" fill="#ef8a3a"/><path d="M6 7h6v12H6z" fill="#fbd0c4"/></svg>
      </div>
      <div class="task pdf">
        <svg width="18" height="24" viewBox="0 0 18 24"><path d="M0 0h12l6 6v18H0z" fill="#f3f3f3"/><path d="M3 17c3-2 5-7 5-11 1 4 3 7 7 8-4 0-8 1-12 3z" fill="none" stroke="#d8232a" stroke-width="2"/></svg>
        <span>5.28.26_Revised_ZB...</span>
      </div>
      <div class="tray">
        <div class="tray-slot">${icon(svg`<path d="M5 12l5-5 5 5"/>`, 16, '#bbb')}</div>
        <div class="tray-slot">${icon(svg`<path d="M3 4h13v9H3zM9 13v5M6 18h6"/>`, 16, '#bbb')}</div>
        <div class="tray-slot">${icon(svg`<path d="M3 8v4h3l4 4V4L6 8zM13 7a4 4 0 0 1 0 6M15 5a7 7 0 0 1 0 10"/>`, 16, '#bbb')}</div>
        <div class="clock">6:21 PM<br />6/4/2026</div>
        <div class="notify">${icon(svg`<path d="M3 3h14v12h-5l-2 3-2-3H3z"/>`, 18, '#bbb')}</div>
      </div>
    </div>`;
  }
}
